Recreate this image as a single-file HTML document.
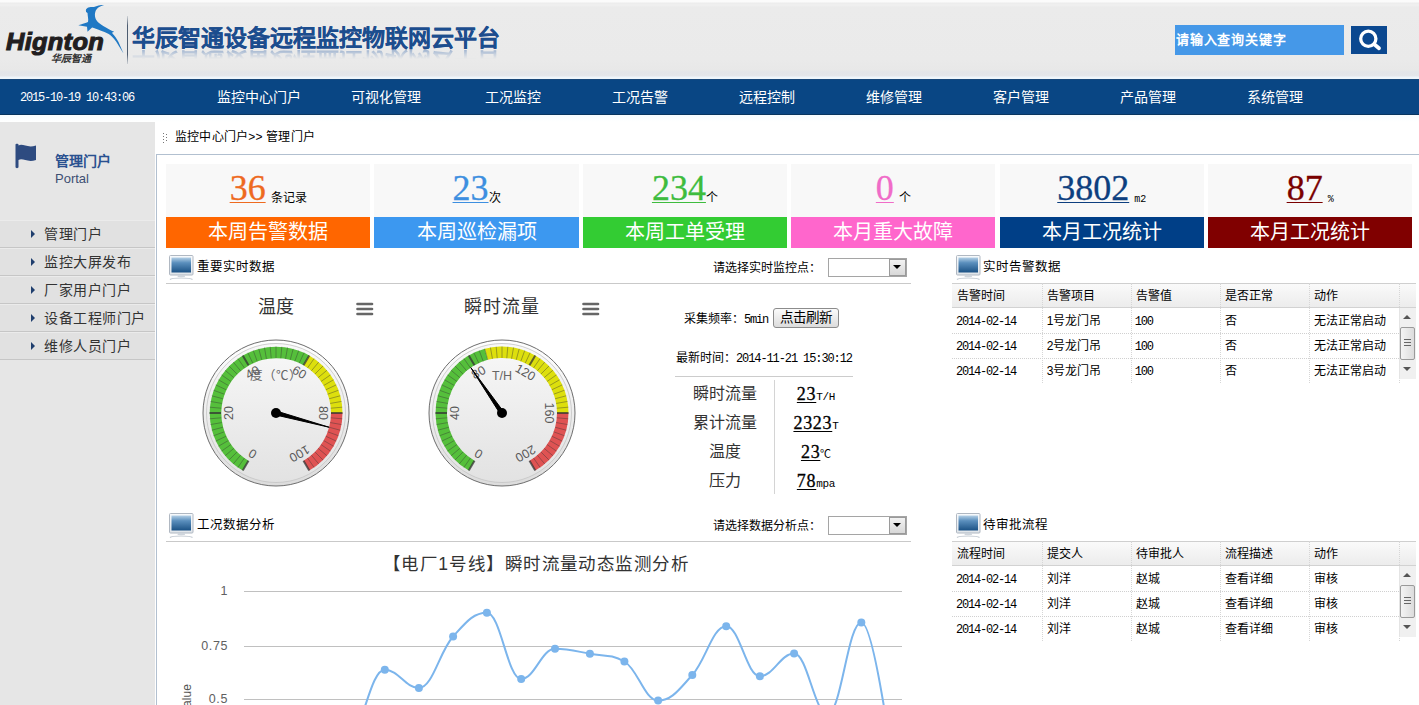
<!DOCTYPE html><html lang="zh-CN"><head><meta charset="utf-8"><style>
*{margin:0;padding:0;box-sizing:border-box}
html,body{width:1419px;height:705px;overflow:hidden;background:#fff;font-family:"Liberation Sans",sans-serif;color:#000}
.a{position:absolute;white-space:nowrap}
.mono{font-family:"Liberation Mono",monospace}
.serif{font-family:"Liberation Serif",serif}
</style></head><body>

<div class="a" style="left:0;top:0;width:1419px;height:79px;background:linear-gradient(#fbfbfb 0,#fbfbfb 2px,#ececec 3px,#f0f0f0 5px,#ebebeb 7px,#eaeaea 60px,#e8e8e8 70px,#e3e5e9 72px,#e4e6ea 76px,#eef5fb 77px,#eef5fb 79px)"></div>
<svg class="a" style="left:0;top:0" width="135" height="70" viewBox="0 0 135 70">
<text x="6" y="49.5" font-family="Liberation Sans" font-weight="bold" font-style="italic" font-size="24.5" fill="#221e1f" stroke="#221e1f" stroke-width="1.1" letter-spacing="0.3" textLength="98" lengthAdjust="spacingAndGlyphs">Hignton</text>
<path d="M104.1,5.1 C101,6 98,7.5 96.7,9.2 C95.5,10.5 95,12.5 94.9,14.7 C94.9,17 95.5,19.5 97.6,21.7 C100,24 106,28 114.2,31.8 L111.9,32.7 C114.5,35.5 117,39 118.5,42 L123.5,53.5 L116.1,41.5 C113.5,38 111,35.5 108.7,34.1 C106,32.5 103,31.2 100.4,30.4 C97,29.2 94.5,28.3 92.1,27.6 L87.5,31.8 L87,26.7 L78.3,25.3 C80.5,24.5 83,23.8 83.8,23.5 C85.5,23 87,22.5 88,22.1 C88.3,20.5 88.3,19 88,17.5 C87.8,16 87.6,14.5 87.5,12.9 L86.1,12 C85.8,11 85.8,10 86.1,9.2 C86.8,8.2 87.5,7.8 88.4,7.4 C90.5,6.8 92.5,6.9 94,6.9 C95.5,6.5 97,5.8 98.6,5.5 C100.5,5.2 102.5,5.1 104.1,5.1 Z" fill="#1f78c4"/>
<defs><linearGradient id="dv" x1="0" y1="0" x2="0" y2="1"><stop offset="0" stop-color="#5d6c80" stop-opacity="0.2"/><stop offset="0.2" stop-color="#4d5c70"/><stop offset="0.8" stop-color="#4d5c70"/><stop offset="1" stop-color="#5d6c80" stop-opacity="0.2"/></linearGradient></defs><rect x="127" y="16" width="1" height="48" fill="url(#dv)"/>
</svg>
<div class="a" style="left:51px;top:50px;font-size:10px;font-weight:bold;font-style:italic;color:#333;letter-spacing:0px">华辰智通</div>
<div class="a" style="left:132px;top:23px;font-size:23px;line-height:30px;font-weight:bold;color:#1c4d8e;-webkit-text-stroke:0.15px #1c4d8e">华辰智通设备远程监控物联网云平台</div>
<div class="a" style="left:132px;top:48.5px;height:10px;overflow:hidden;width:370px;-webkit-mask-image:linear-gradient(rgba(0,0,0,0.75),rgba(0,0,0,0.25) 60%,rgba(0,0,0,0) 100%)"><div style="font-size:23px;line-height:30px;font-weight:bold;color:#7d9bc4;transform:scaleY(-1);transform-origin:0 0;white-space:nowrap;position:relative;top:27px;filter:blur(0.6px)">华辰智通设备远程监控物联网云平台</div></div>
<div class="a" style="left:1175px;top:25px;width:169px;height:30px;background:#4598e8"></div>
<div class="a" style="left:1176px;top:32px;font-size:13px;line-height:15px;font-weight:bold;letter-spacing:0.8px;color:#fff">请输入查询关键字</div>
<div class="a" style="left:1351px;top:26px;width:36px;height:28px;background:#0b4890"></div>
<svg class="a" style="left:1352px;top:26px" width="35" height="27"><circle cx="16.3" cy="12.7" r="7.6" stroke="#fff" stroke-width="3.3" fill="none"/><line x1="22.5" y1="18.5" x2="27" y2="22.3" stroke="#fff" stroke-width="3.8" stroke-linecap="round"/></svg>
<div class="a" style="left:0;top:79px;width:1419px;height:36px;background:#094684;border-top:1px solid #17477a;border-bottom:1px solid #08355f"></div>
<div class="a" style="left:0;top:115px;width:1419px;height:7px;background:linear-gradient(#f6fcff,#fff)"></div>
<div class="a mono" style="left:20px;top:92px;font-size:12px;line-height:13px;letter-spacing:-1.2px;color:#fff">2015-10-19 10:43:06</div>
<div class="a" style="left:198.8px;width:120px;text-align:center;top:89px;font-size:14px;line-height:17px;color:#fff">监控中心门户</div>
<div class="a" style="left:325.8px;width:120px;text-align:center;top:89px;font-size:14px;line-height:17px;color:#fff">可视化管理</div>
<div class="a" style="left:452.8px;width:120px;text-align:center;top:89px;font-size:14px;line-height:17px;color:#fff">工况监控</div>
<div class="a" style="left:579.8px;width:120px;text-align:center;top:89px;font-size:14px;line-height:17px;color:#fff">工况告警</div>
<div class="a" style="left:706.8px;width:120px;text-align:center;top:89px;font-size:14px;line-height:17px;color:#fff">远程控制</div>
<div class="a" style="left:833.8px;width:120px;text-align:center;top:89px;font-size:14px;line-height:17px;color:#fff">维修管理</div>
<div class="a" style="left:960.8px;width:120px;text-align:center;top:89px;font-size:14px;line-height:17px;color:#fff">客户管理</div>
<div class="a" style="left:1087.8px;width:120px;text-align:center;top:89px;font-size:14px;line-height:17px;color:#fff">产品管理</div>
<div class="a" style="left:1214.8px;width:120px;text-align:center;top:89px;font-size:14px;line-height:17px;color:#fff">系统管理</div>
<div class="a" style="left:0;top:122px;width:155px;height:583px;background:#e6e6e6"></div>
<svg class="a" style="left:14px;top:143px" width="24" height="26"><path d="M1.5,1.5 C1.5,0.5 4.5,0.5 4.5,1.5 L4.5,2.5 C9,0 13,5.5 22,2.5 L22,17 C13,20 9,14.5 4.5,17 L4.5,24 C4.5,25.5 1.5,25.5 1.5,24 Z" fill="#2e4b80"/></svg>
<div class="a" style="left:55px;top:153px;font-size:14px;line-height:16px;font-weight:bold;color:#2a5190">管理门户</div>
<div class="a" style="left:55px;top:171px;font-size:13px;line-height:15px;color:#3d4f73">Portal</div>
<div class="a" style="left:0;top:220px;width:155px;height:28px;background:#e1e1e1;border-bottom:1px solid #c6c6c6;box-shadow:inset 0 1px 0 #ebebeb"></div>
<svg class="a" style="left:30px;top:229px" width="6" height="10"><path d="M1,1 L5,5 L1,9 Z" fill="#1f3e6e"/></svg>
<div class="a" style="left:44px;top:226px;font-size:14px;line-height:17px;letter-spacing:0.5px;color:#333">管理门户</div>
<div class="a" style="left:0;top:248px;width:155px;height:28px;background:#e1e1e1;border-bottom:1px solid #c6c6c6;box-shadow:inset 0 1px 0 #ebebeb"></div>
<svg class="a" style="left:30px;top:257px" width="6" height="10"><path d="M1,1 L5,5 L1,9 Z" fill="#1f3e6e"/></svg>
<div class="a" style="left:44px;top:254px;font-size:14px;line-height:17px;letter-spacing:0.5px;color:#333">监控大屏发布</div>
<div class="a" style="left:0;top:276px;width:155px;height:28px;background:#e1e1e1;border-bottom:1px solid #c6c6c6;box-shadow:inset 0 1px 0 #ebebeb"></div>
<svg class="a" style="left:30px;top:285px" width="6" height="10"><path d="M1,1 L5,5 L1,9 Z" fill="#1f3e6e"/></svg>
<div class="a" style="left:44px;top:282px;font-size:14px;line-height:17px;letter-spacing:0.5px;color:#333">厂家用户门户</div>
<div class="a" style="left:0;top:304px;width:155px;height:28px;background:#e1e1e1;border-bottom:1px solid #c6c6c6;box-shadow:inset 0 1px 0 #ebebeb"></div>
<svg class="a" style="left:30px;top:313px" width="6" height="10"><path d="M1,1 L5,5 L1,9 Z" fill="#1f3e6e"/></svg>
<div class="a" style="left:44px;top:310px;font-size:14px;line-height:17px;letter-spacing:0.5px;color:#333">设备工程师门户</div>
<div class="a" style="left:0;top:332px;width:155px;height:28px;background:#e1e1e1;border-bottom:1px solid #c6c6c6;box-shadow:inset 0 1px 0 #ebebeb"></div>
<svg class="a" style="left:30px;top:341px" width="6" height="10"><path d="M1,1 L5,5 L1,9 Z" fill="#1f3e6e"/></svg>
<div class="a" style="left:44px;top:338px;font-size:14px;line-height:17px;letter-spacing:0.5px;color:#333">维修人员门户</div>
<div class="a" style="left:156px;top:154px;width:1263px;height:551px;border-left:1px solid #b2c0d0;border-top:1px solid #b2c0d0"></div>
<svg class="a" style="left:162px;top:132px" width="6" height="12"><g fill="#777"><rect x="1" y="1" width="1" height="1"/><rect x="1" y="4" width="1" height="1"/><rect x="1" y="7" width="1" height="1"/><rect x="1" y="10" width="1" height="1"/><rect x="4" y="2" width="1" height="1"/><rect x="4" y="5" width="1" height="1"/><rect x="4" y="8" width="1" height="1"/></g></svg>
<div class="a" style="left:175px;top:130px;font-size:12px;line-height:15px;letter-spacing:0.2px;color:#000">监控中心门户&gt;&gt; 管理门户</div>
<div class="a" style="left:166.0px;top:164px;width:204.3px;height:53px;background:#f8f8f8"></div>
<div class="a" style="left:166.0px;top:217px;width:204.3px;height:31px;background:#ff6600"></div>
<div class="a" style="left:166.0px;top:220px;width:204.3px;text-align:center;font-size:20px;line-height:24px;color:#fff">本周告警数据</div>
<div class="a" style="left:166.0px;top:168px;width:204.3px;text-align:center;line-height:40px"><span class="serif" style="font-size:36px;color:#ee6a1f;-webkit-text-stroke:0.3px #ee6a1f;text-decoration:underline;text-decoration-thickness:1px;text-underline-offset:2px">36</span><span style="font-size:12px;margin-left:5px;font-family:'Liberation Sans', sans-serif;position:relative;top:2px">条记录</span></div>
<div class="a" style="left:374.4px;top:164px;width:204.3px;height:53px;background:#f8f8f8"></div>
<div class="a" style="left:374.4px;top:217px;width:204.3px;height:31px;background:#3c98f0"></div>
<div class="a" style="left:374.4px;top:220px;width:204.3px;text-align:center;font-size:20px;line-height:24px;color:#fff">本周巡检漏项</div>
<div class="a" style="left:374.4px;top:168px;width:204.3px;text-align:center;line-height:40px"><span class="serif" style="font-size:36px;color:#3d8fe0;-webkit-text-stroke:0.3px #3d8fe0;text-decoration:underline;text-decoration-thickness:1px;text-underline-offset:2px">23</span><span style="font-size:12px;margin-left:0px;font-family:'Liberation Sans', sans-serif;position:relative;top:2px">次</span></div>
<div class="a" style="left:582.8px;top:164px;width:204.3px;height:53px;background:#f8f8f8"></div>
<div class="a" style="left:582.8px;top:217px;width:204.3px;height:31px;background:#33cc33"></div>
<div class="a" style="left:582.8px;top:220px;width:204.3px;text-align:center;font-size:20px;line-height:24px;color:#fff">本周工单受理</div>
<div class="a" style="left:582.8px;top:168px;width:204.3px;text-align:center;line-height:40px"><span class="serif" style="font-size:36px;color:#3ebc3e;-webkit-text-stroke:0.3px #3ebc3e;text-decoration:underline;text-decoration-thickness:1px;text-underline-offset:2px">234</span><span style="font-size:12px;margin-left:0px;font-family:'Liberation Sans', sans-serif;position:relative;top:2px">个</span></div>
<div class="a" style="left:791.2px;top:164px;width:204.3px;height:53px;background:#f8f8f8"></div>
<div class="a" style="left:791.2px;top:217px;width:204.3px;height:31px;background:#ff66cc"></div>
<div class="a" style="left:791.2px;top:220px;width:204.3px;text-align:center;font-size:20px;line-height:24px;color:#fff">本月重大故障</div>
<div class="a" style="left:791.2px;top:168px;width:204.3px;text-align:center;line-height:40px"><span class="serif" style="font-size:36px;color:#f06cc8;-webkit-text-stroke:0.3px #f06cc8;text-decoration:underline;text-decoration-thickness:1px;text-underline-offset:2px">0</span><span style="font-size:12px;margin-left:5px;font-family:'Liberation Sans', sans-serif;position:relative;top:2px">个</span></div>
<div class="a" style="left:999.6px;top:164px;width:204.3px;height:53px;background:#f8f8f8"></div>
<div class="a" style="left:999.6px;top:217px;width:204.3px;height:31px;background:#003f87"></div>
<div class="a" style="left:999.6px;top:220px;width:204.3px;text-align:center;font-size:20px;line-height:24px;color:#fff">本月工况统计</div>
<div class="a" style="left:999.6px;top:168px;width:204.3px;text-align:center;line-height:40px"><span class="serif" style="font-size:36px;color:#0d3f7f;-webkit-text-stroke:0.3px #0d3f7f;text-decoration:underline;text-decoration-thickness:1px;text-underline-offset:2px">3802</span><span style="font-size:10px;margin-left:5px;font-family:'Liberation Mono', monospace;position:relative;top:2px">m2</span></div>
<div class="a" style="left:1208.0px;top:164px;width:204.3px;height:53px;background:#f8f8f8"></div>
<div class="a" style="left:1208.0px;top:217px;width:204.3px;height:31px;background:#800000"></div>
<div class="a" style="left:1208.0px;top:220px;width:204.3px;text-align:center;font-size:20px;line-height:24px;color:#fff">本月工况统计</div>
<div class="a" style="left:1208.0px;top:168px;width:204.3px;text-align:center;line-height:40px"><span class="serif" style="font-size:36px;color:#7a0000;-webkit-text-stroke:0.3px #7a0000;text-decoration:underline;text-decoration-thickness:1px;text-underline-offset:2px">87</span><span style="font-size:10px;margin-left:5px;font-family:'Liberation Mono', monospace;position:relative;top:2px">%</span></div>
<svg class="a" style="left:169px;top:255px" width="26" height="26" viewBox="0 0 26 26">
<defs><linearGradient id="scr169255" x1="0" y1="0" x2="0" y2="1"><stop offset="0" stop-color="#b4d0e6"/><stop offset="0.35" stop-color="#5b8fbd"/><stop offset="1" stop-color="#1b5285"/></linearGradient>
<linearGradient id="bzl169255" x1="0" y1="0" x2="0" y2="1"><stop offset="0" stop-color="#f8fafc"/><stop offset="1" stop-color="#dfe4e9"/></linearGradient></defs>
<rect x="0.5" y="0.5" width="23.5" height="19.5" rx="1" fill="url(#bzl169255)" stroke="#b0b8c2"/>
<rect x="2.5" y="2.5" width="19.5" height="15" fill="url(#scr169255)"/>
<path d="M9,20 L15.5,20 L16,22 L8.5,22 Z" fill="#cfd5dc"/>
<path d="M1,24.5 C3,22.5 21,22.5 23.5,24.5" stroke="#c3cad2" stroke-width="1.2" fill="none"/>
</svg>
<div class="a" style="left:197px;top:260px;font-size:12.5px;line-height:15px;color:#000">重要实时数据</div>
<div class="a" style="left:713px;top:261px;font-size:12px;line-height:15px;color:#000">请选择实时监控点：</div>
<div class="a" style="left:828px;top:258px;width:79px;height:19px;border:1px solid #a5a5a5;background:#fff"></div>
<div class="a" style="left:889px;top:259px;width:17px;height:17px;background:linear-gradient(#f2f2f2,#d8d8d8);border:1px solid #9a9a9a"></div>
<svg class="a" style="left:893px;top:265px" width="9" height="5"><path d="M0,0 L8,0 L4,4 Z" fill="#000"/></svg>
<div class="a" style="left:166px;top:283px;width:745px;height:1px;background:#c9c9c9"></div>
<svg class="a" style="left:169px;top:513px" width="26" height="26" viewBox="0 0 26 26">
<defs><linearGradient id="scr169513" x1="0" y1="0" x2="0" y2="1"><stop offset="0" stop-color="#b4d0e6"/><stop offset="0.35" stop-color="#5b8fbd"/><stop offset="1" stop-color="#1b5285"/></linearGradient>
<linearGradient id="bzl169513" x1="0" y1="0" x2="0" y2="1"><stop offset="0" stop-color="#f8fafc"/><stop offset="1" stop-color="#dfe4e9"/></linearGradient></defs>
<rect x="0.5" y="0.5" width="23.5" height="19.5" rx="1" fill="url(#bzl169513)" stroke="#b0b8c2"/>
<rect x="2.5" y="2.5" width="19.5" height="15" fill="url(#scr169513)"/>
<path d="M9,20 L15.5,20 L16,22 L8.5,22 Z" fill="#cfd5dc"/>
<path d="M1,24.5 C3,22.5 21,22.5 23.5,24.5" stroke="#c3cad2" stroke-width="1.2" fill="none"/>
</svg>
<div class="a" style="left:197px;top:518px;font-size:12.5px;line-height:15px;color:#000">工况数据分析</div>
<div class="a" style="left:713px;top:519px;font-size:12px;line-height:15px;color:#000">请选择数据分析点：</div>
<div class="a" style="left:828px;top:516px;width:79px;height:19px;border:1px solid #a5a5a5;background:#fff"></div>
<div class="a" style="left:889px;top:517px;width:17px;height:17px;background:linear-gradient(#f2f2f2,#d8d8d8);border:1px solid #9a9a9a"></div>
<svg class="a" style="left:893px;top:523px" width="9" height="5"><path d="M0,0 L8,0 L4,4 Z" fill="#000"/></svg>
<div class="a" style="left:166px;top:541px;width:745px;height:1px;background:#c9c9c9"></div>
<svg class="a" style="left:956px;top:255px" width="26" height="26" viewBox="0 0 26 26">
<defs><linearGradient id="scr956255" x1="0" y1="0" x2="0" y2="1"><stop offset="0" stop-color="#b4d0e6"/><stop offset="0.35" stop-color="#5b8fbd"/><stop offset="1" stop-color="#1b5285"/></linearGradient>
<linearGradient id="bzl956255" x1="0" y1="0" x2="0" y2="1"><stop offset="0" stop-color="#f8fafc"/><stop offset="1" stop-color="#dfe4e9"/></linearGradient></defs>
<rect x="0.5" y="0.5" width="23.5" height="19.5" rx="1" fill="url(#bzl956255)" stroke="#b0b8c2"/>
<rect x="2.5" y="2.5" width="19.5" height="15" fill="url(#scr956255)"/>
<path d="M9,20 L15.5,20 L16,22 L8.5,22 Z" fill="#cfd5dc"/>
<path d="M1,24.5 C3,22.5 21,22.5 23.5,24.5" stroke="#c3cad2" stroke-width="1.2" fill="none"/>
</svg>
<div class="a" style="left:983px;top:260px;font-size:12.5px;line-height:15px;color:#000">实时告警数据</div>
<svg class="a" style="left:956px;top:513px" width="26" height="26" viewBox="0 0 26 26">
<defs><linearGradient id="scr956513" x1="0" y1="0" x2="0" y2="1"><stop offset="0" stop-color="#b4d0e6"/><stop offset="0.35" stop-color="#5b8fbd"/><stop offset="1" stop-color="#1b5285"/></linearGradient>
<linearGradient id="bzl956513" x1="0" y1="0" x2="0" y2="1"><stop offset="0" stop-color="#f8fafc"/><stop offset="1" stop-color="#dfe4e9"/></linearGradient></defs>
<rect x="0.5" y="0.5" width="23.5" height="19.5" rx="1" fill="url(#bzl956513)" stroke="#b0b8c2"/>
<rect x="2.5" y="2.5" width="19.5" height="15" fill="url(#scr956513)"/>
<path d="M9,20 L15.5,20 L16,22 L8.5,22 Z" fill="#cfd5dc"/>
<path d="M1,24.5 C3,22.5 21,22.5 23.5,24.5" stroke="#c3cad2" stroke-width="1.2" fill="none"/>
</svg>
<div class="a" style="left:983px;top:518px;font-size:12.5px;line-height:15px;color:#000">待审批流程</div>
<svg class="a" style="left:195.60000000000002px;top:333.2px" width="160" height="160" viewBox="195.60000000000002 333.2 160 160"><defs>
<linearGradient id="bz1" x1="0" y1="0" x2="0" y2="1"><stop offset="0" stop-color="#ffffff"/><stop offset="1" stop-color="#dcdcdc"/></linearGradient>
<linearGradient id="bz21" x1="0" y1="0" x2="0" y2="1"><stop offset="0" stop-color="#d0d0d0"/><stop offset="1" stop-color="#ffffff"/></linearGradient>
<linearGradient id="fc1" x1="0" y1="0" x2="0" y2="1"><stop offset="0" stop-color="#f8f8f8"/><stop offset="1" stop-color="#e2e2e2"/></linearGradient>
</defs><circle cx="275.6" cy="413.2" r="73" fill="url(#bz1)" stroke="#6e6e6e" stroke-width="1"/><circle cx="275.6" cy="413.2" r="69.5" fill="url(#fc1)" stroke="#c4c4c4" stroke-width="0.8"/><path d="M242.35,470.79 A66.5,66.5 0 0 1 308.85,355.61 L303.10,365.57 A55,55 0 0 0 248.10,460.83 Z" fill="#55BF3B"/><path d="M308.85,355.61 A66.5,66.5 0 0 1 342.10,413.20 L330.60,413.20 A55,55 0 0 0 303.10,365.57 Z" fill="#DDDF0D"/><path d="M342.10,413.20 A66.5,66.5 0 0 1 308.85,470.79 L303.10,460.83 A55,55 0 0 0 330.60,413.20 Z" fill="#DF5353"/><line x1="242.35" y1="470.79" x2="248.10" y2="460.83" stroke="#333" stroke-width="2" opacity="0.75"/><line x1="237.46" y1="467.67" x2="244.05" y2="458.25" stroke="#333" stroke-width="1" opacity="0.4"/><line x1="232.85" y1="464.14" x2="240.25" y2="455.33" stroke="#333" stroke-width="1" opacity="0.4"/><line x1="228.58" y1="460.22" x2="236.71" y2="452.09" stroke="#333" stroke-width="1" opacity="0.4"/><line x1="224.66" y1="455.95" x2="233.47" y2="448.55" stroke="#333" stroke-width="1" opacity="0.4"/><line x1="221.13" y1="451.34" x2="230.55" y2="444.75" stroke="#333" stroke-width="1" opacity="0.4"/><line x1="218.01" y1="446.45" x2="227.97" y2="440.70" stroke="#333" stroke-width="1" opacity="0.4"/><line x1="215.33" y1="441.30" x2="225.75" y2="436.44" stroke="#333" stroke-width="1" opacity="0.4"/><line x1="213.11" y1="435.94" x2="223.92" y2="432.01" stroke="#333" stroke-width="1" opacity="0.4"/><line x1="211.37" y1="430.41" x2="222.47" y2="427.44" stroke="#333" stroke-width="1" opacity="0.4"/><line x1="210.11" y1="424.75" x2="221.44" y2="422.75" stroke="#333" stroke-width="1" opacity="0.4"/><line x1="209.35" y1="419.00" x2="220.81" y2="417.99" stroke="#333" stroke-width="1" opacity="0.4"/><line x1="209.10" y1="413.20" x2="220.60" y2="413.20" stroke="#333" stroke-width="2" opacity="0.75"/><line x1="209.35" y1="407.40" x2="220.81" y2="408.41" stroke="#333" stroke-width="1" opacity="0.4"/><line x1="210.11" y1="401.65" x2="221.44" y2="403.65" stroke="#333" stroke-width="1" opacity="0.4"/><line x1="211.37" y1="395.99" x2="222.47" y2="398.96" stroke="#333" stroke-width="1" opacity="0.4"/><line x1="213.11" y1="390.46" x2="223.92" y2="394.39" stroke="#333" stroke-width="1" opacity="0.4"/><line x1="215.33" y1="385.10" x2="225.75" y2="389.96" stroke="#333" stroke-width="1" opacity="0.4"/><line x1="218.01" y1="379.95" x2="227.97" y2="385.70" stroke="#333" stroke-width="1" opacity="0.4"/><line x1="221.13" y1="375.06" x2="230.55" y2="381.65" stroke="#333" stroke-width="1" opacity="0.4"/><line x1="224.66" y1="370.45" x2="233.47" y2="377.85" stroke="#333" stroke-width="1" opacity="0.4"/><line x1="228.58" y1="366.18" x2="236.71" y2="374.31" stroke="#333" stroke-width="1" opacity="0.4"/><line x1="232.85" y1="362.26" x2="240.25" y2="371.07" stroke="#333" stroke-width="1" opacity="0.4"/><line x1="237.46" y1="358.73" x2="244.05" y2="368.15" stroke="#333" stroke-width="1" opacity="0.4"/><line x1="242.35" y1="355.61" x2="248.10" y2="365.57" stroke="#333" stroke-width="2" opacity="0.75"/><line x1="247.50" y1="352.93" x2="252.36" y2="363.35" stroke="#333" stroke-width="1" opacity="0.4"/><line x1="252.86" y1="350.71" x2="256.79" y2="361.52" stroke="#333" stroke-width="1" opacity="0.4"/><line x1="258.39" y1="348.97" x2="261.36" y2="360.07" stroke="#333" stroke-width="1" opacity="0.4"/><line x1="264.05" y1="347.71" x2="266.05" y2="359.04" stroke="#333" stroke-width="1" opacity="0.4"/><line x1="269.80" y1="346.95" x2="270.81" y2="358.41" stroke="#333" stroke-width="1" opacity="0.4"/><line x1="275.60" y1="346.70" x2="275.60" y2="358.20" stroke="#333" stroke-width="1" opacity="0.4"/><line x1="281.40" y1="346.95" x2="280.39" y2="358.41" stroke="#333" stroke-width="1" opacity="0.4"/><line x1="287.15" y1="347.71" x2="285.15" y2="359.04" stroke="#333" stroke-width="1" opacity="0.4"/><line x1="292.81" y1="348.97" x2="289.84" y2="360.07" stroke="#333" stroke-width="1" opacity="0.4"/><line x1="298.34" y1="350.71" x2="294.41" y2="361.52" stroke="#333" stroke-width="1" opacity="0.4"/><line x1="303.70" y1="352.93" x2="298.84" y2="363.35" stroke="#333" stroke-width="1" opacity="0.4"/><line x1="308.85" y1="355.61" x2="303.10" y2="365.57" stroke="#333" stroke-width="2" opacity="0.75"/><line x1="313.74" y1="358.73" x2="307.15" y2="368.15" stroke="#333" stroke-width="1" opacity="0.4"/><line x1="318.35" y1="362.26" x2="310.95" y2="371.07" stroke="#333" stroke-width="1" opacity="0.4"/><line x1="322.62" y1="366.18" x2="314.49" y2="374.31" stroke="#333" stroke-width="1" opacity="0.4"/><line x1="326.54" y1="370.45" x2="317.73" y2="377.85" stroke="#333" stroke-width="1" opacity="0.4"/><line x1="330.07" y1="375.06" x2="320.65" y2="381.65" stroke="#333" stroke-width="1" opacity="0.4"/><line x1="333.19" y1="379.95" x2="323.23" y2="385.70" stroke="#333" stroke-width="1" opacity="0.4"/><line x1="335.87" y1="385.10" x2="325.45" y2="389.96" stroke="#333" stroke-width="1" opacity="0.4"/><line x1="338.09" y1="390.46" x2="327.28" y2="394.39" stroke="#333" stroke-width="1" opacity="0.4"/><line x1="339.83" y1="395.99" x2="328.73" y2="398.96" stroke="#333" stroke-width="1" opacity="0.4"/><line x1="341.09" y1="401.65" x2="329.76" y2="403.65" stroke="#333" stroke-width="1" opacity="0.4"/><line x1="341.85" y1="407.40" x2="330.39" y2="408.41" stroke="#333" stroke-width="1" opacity="0.4"/><line x1="342.10" y1="413.20" x2="330.60" y2="413.20" stroke="#333" stroke-width="2" opacity="0.75"/><line x1="341.85" y1="419.00" x2="330.39" y2="417.99" stroke="#333" stroke-width="1" opacity="0.4"/><line x1="341.09" y1="424.75" x2="329.76" y2="422.75" stroke="#333" stroke-width="1" opacity="0.4"/><line x1="339.83" y1="430.41" x2="328.73" y2="427.44" stroke="#333" stroke-width="1" opacity="0.4"/><line x1="338.09" y1="435.94" x2="327.28" y2="432.01" stroke="#333" stroke-width="1" opacity="0.4"/><line x1="335.87" y1="441.30" x2="325.45" y2="436.44" stroke="#333" stroke-width="1" opacity="0.4"/><line x1="333.19" y1="446.45" x2="323.23" y2="440.70" stroke="#333" stroke-width="1" opacity="0.4"/><line x1="330.07" y1="451.34" x2="320.65" y2="444.75" stroke="#333" stroke-width="1" opacity="0.4"/><line x1="326.54" y1="455.95" x2="317.73" y2="448.55" stroke="#333" stroke-width="1" opacity="0.4"/><line x1="322.62" y1="460.22" x2="314.49" y2="452.09" stroke="#333" stroke-width="1" opacity="0.4"/><line x1="318.35" y1="464.14" x2="310.95" y2="455.33" stroke="#333" stroke-width="1" opacity="0.4"/><line x1="313.74" y1="467.67" x2="307.15" y2="458.25" stroke="#333" stroke-width="1" opacity="0.4"/><line x1="308.85" y1="470.79" x2="303.10" y2="460.83" stroke="#333" stroke-width="2" opacity="0.75"/><text x="252.60" y="453.04" transform="rotate(-150 252.60 453.04)" text-anchor="middle" dominant-baseline="middle" font-family="Liberation Sans" font-size="12.5" fill="#5a5a5a">0</text><text x="229.60" y="413.20" transform="rotate(-90 229.60 413.20)" text-anchor="middle" dominant-baseline="middle" font-family="Liberation Sans" font-size="12.5" fill="#5a5a5a">20</text><text x="252.60" y="373.36" transform="rotate(-30 252.60 373.36)" text-anchor="middle" dominant-baseline="middle" font-family="Liberation Sans" font-size="12.5" fill="#5a5a5a">40</text><text x="298.60" y="373.36" transform="rotate(30 298.60 373.36)" text-anchor="middle" dominant-baseline="middle" font-family="Liberation Sans" font-size="12.5" fill="#5a5a5a">60</text><text x="321.60" y="413.20" transform="rotate(90 321.60 413.20)" text-anchor="middle" dominant-baseline="middle" font-family="Liberation Sans" font-size="12.5" fill="#5a5a5a">80</text><text x="298.60" y="453.04" transform="rotate(150 298.60 453.04)" text-anchor="middle" dominant-baseline="middle" font-family="Liberation Sans" font-size="12.5" fill="#5a5a5a">100</text><text x="275.6" y="380.2" text-anchor="middle" font-family="Liberation Sans" font-size="12.5" fill="#666">度（℃）</text><path d="M275.08,415.13 L328.73,427.44 L276.12,411.27 Z" fill="#000" stroke="#000" stroke-width="1"/><circle cx="275.6" cy="413.2" r="5" fill="#000"/></svg>
<svg class="a" style="left:421.8px;top:333.2px" width="160" height="160" viewBox="421.8 333.2 160 160"><defs>
<linearGradient id="bz2" x1="0" y1="0" x2="0" y2="1"><stop offset="0" stop-color="#ffffff"/><stop offset="1" stop-color="#dcdcdc"/></linearGradient>
<linearGradient id="bz22" x1="0" y1="0" x2="0" y2="1"><stop offset="0" stop-color="#d0d0d0"/><stop offset="1" stop-color="#ffffff"/></linearGradient>
<linearGradient id="fc2" x1="0" y1="0" x2="0" y2="1"><stop offset="0" stop-color="#f8f8f8"/><stop offset="1" stop-color="#e2e2e2"/></linearGradient>
</defs><circle cx="501.8" cy="413.2" r="73" fill="url(#bz2)" stroke="#6e6e6e" stroke-width="1"/><circle cx="501.8" cy="413.2" r="69.5" fill="url(#fc2)" stroke="#c4c4c4" stroke-width="0.8"/><path d="M468.55,470.79 A66.5,66.5 0 0 1 484.59,348.97 L487.56,360.07 A55,55 0 0 0 474.30,460.83 Z" fill="#55BF3B"/><path d="M484.59,348.97 A66.5,66.5 0 0 1 568.30,413.20 L556.80,413.20 A55,55 0 0 0 487.56,360.07 Z" fill="#DDDF0D"/><path d="M568.30,413.20 A66.5,66.5 0 0 1 535.05,470.79 L529.30,460.83 A55,55 0 0 0 556.80,413.20 Z" fill="#DF5353"/><line x1="468.55" y1="470.79" x2="474.30" y2="460.83" stroke="#333" stroke-width="2" opacity="0.75"/><line x1="463.66" y1="467.67" x2="470.25" y2="458.25" stroke="#333" stroke-width="1" opacity="0.4"/><line x1="459.05" y1="464.14" x2="466.45" y2="455.33" stroke="#333" stroke-width="1" opacity="0.4"/><line x1="454.78" y1="460.22" x2="462.91" y2="452.09" stroke="#333" stroke-width="1" opacity="0.4"/><line x1="450.86" y1="455.95" x2="459.67" y2="448.55" stroke="#333" stroke-width="1" opacity="0.4"/><line x1="447.33" y1="451.34" x2="456.75" y2="444.75" stroke="#333" stroke-width="1" opacity="0.4"/><line x1="444.21" y1="446.45" x2="454.17" y2="440.70" stroke="#333" stroke-width="1" opacity="0.4"/><line x1="441.53" y1="441.30" x2="451.95" y2="436.44" stroke="#333" stroke-width="1" opacity="0.4"/><line x1="439.31" y1="435.94" x2="450.12" y2="432.01" stroke="#333" stroke-width="1" opacity="0.4"/><line x1="437.57" y1="430.41" x2="448.67" y2="427.44" stroke="#333" stroke-width="1" opacity="0.4"/><line x1="436.31" y1="424.75" x2="447.64" y2="422.75" stroke="#333" stroke-width="1" opacity="0.4"/><line x1="435.55" y1="419.00" x2="447.01" y2="417.99" stroke="#333" stroke-width="1" opacity="0.4"/><line x1="435.30" y1="413.20" x2="446.80" y2="413.20" stroke="#333" stroke-width="2" opacity="0.75"/><line x1="435.55" y1="407.40" x2="447.01" y2="408.41" stroke="#333" stroke-width="1" opacity="0.4"/><line x1="436.31" y1="401.65" x2="447.64" y2="403.65" stroke="#333" stroke-width="1" opacity="0.4"/><line x1="437.57" y1="395.99" x2="448.67" y2="398.96" stroke="#333" stroke-width="1" opacity="0.4"/><line x1="439.31" y1="390.46" x2="450.12" y2="394.39" stroke="#333" stroke-width="1" opacity="0.4"/><line x1="441.53" y1="385.10" x2="451.95" y2="389.96" stroke="#333" stroke-width="1" opacity="0.4"/><line x1="444.21" y1="379.95" x2="454.17" y2="385.70" stroke="#333" stroke-width="1" opacity="0.4"/><line x1="447.33" y1="375.06" x2="456.75" y2="381.65" stroke="#333" stroke-width="1" opacity="0.4"/><line x1="450.86" y1="370.45" x2="459.67" y2="377.85" stroke="#333" stroke-width="1" opacity="0.4"/><line x1="454.78" y1="366.18" x2="462.91" y2="374.31" stroke="#333" stroke-width="1" opacity="0.4"/><line x1="459.05" y1="362.26" x2="466.45" y2="371.07" stroke="#333" stroke-width="1" opacity="0.4"/><line x1="463.66" y1="358.73" x2="470.25" y2="368.15" stroke="#333" stroke-width="1" opacity="0.4"/><line x1="468.55" y1="355.61" x2="474.30" y2="365.57" stroke="#333" stroke-width="2" opacity="0.75"/><line x1="473.70" y1="352.93" x2="478.56" y2="363.35" stroke="#333" stroke-width="1" opacity="0.4"/><line x1="479.06" y1="350.71" x2="482.99" y2="361.52" stroke="#333" stroke-width="1" opacity="0.4"/><line x1="484.59" y1="348.97" x2="487.56" y2="360.07" stroke="#333" stroke-width="1" opacity="0.4"/><line x1="490.25" y1="347.71" x2="492.25" y2="359.04" stroke="#333" stroke-width="1" opacity="0.4"/><line x1="496.00" y1="346.95" x2="497.01" y2="358.41" stroke="#333" stroke-width="1" opacity="0.4"/><line x1="501.80" y1="346.70" x2="501.80" y2="358.20" stroke="#333" stroke-width="1" opacity="0.4"/><line x1="507.60" y1="346.95" x2="506.59" y2="358.41" stroke="#333" stroke-width="1" opacity="0.4"/><line x1="513.35" y1="347.71" x2="511.35" y2="359.04" stroke="#333" stroke-width="1" opacity="0.4"/><line x1="519.01" y1="348.97" x2="516.04" y2="360.07" stroke="#333" stroke-width="1" opacity="0.4"/><line x1="524.54" y1="350.71" x2="520.61" y2="361.52" stroke="#333" stroke-width="1" opacity="0.4"/><line x1="529.90" y1="352.93" x2="525.04" y2="363.35" stroke="#333" stroke-width="1" opacity="0.4"/><line x1="535.05" y1="355.61" x2="529.30" y2="365.57" stroke="#333" stroke-width="2" opacity="0.75"/><line x1="539.94" y1="358.73" x2="533.35" y2="368.15" stroke="#333" stroke-width="1" opacity="0.4"/><line x1="544.55" y1="362.26" x2="537.15" y2="371.07" stroke="#333" stroke-width="1" opacity="0.4"/><line x1="548.82" y1="366.18" x2="540.69" y2="374.31" stroke="#333" stroke-width="1" opacity="0.4"/><line x1="552.74" y1="370.45" x2="543.93" y2="377.85" stroke="#333" stroke-width="1" opacity="0.4"/><line x1="556.27" y1="375.06" x2="546.85" y2="381.65" stroke="#333" stroke-width="1" opacity="0.4"/><line x1="559.39" y1="379.95" x2="549.43" y2="385.70" stroke="#333" stroke-width="1" opacity="0.4"/><line x1="562.07" y1="385.10" x2="551.65" y2="389.96" stroke="#333" stroke-width="1" opacity="0.4"/><line x1="564.29" y1="390.46" x2="553.48" y2="394.39" stroke="#333" stroke-width="1" opacity="0.4"/><line x1="566.03" y1="395.99" x2="554.93" y2="398.96" stroke="#333" stroke-width="1" opacity="0.4"/><line x1="567.29" y1="401.65" x2="555.96" y2="403.65" stroke="#333" stroke-width="1" opacity="0.4"/><line x1="568.05" y1="407.40" x2="556.59" y2="408.41" stroke="#333" stroke-width="1" opacity="0.4"/><line x1="568.30" y1="413.20" x2="556.80" y2="413.20" stroke="#333" stroke-width="2" opacity="0.75"/><line x1="568.05" y1="419.00" x2="556.59" y2="417.99" stroke="#333" stroke-width="1" opacity="0.4"/><line x1="567.29" y1="424.75" x2="555.96" y2="422.75" stroke="#333" stroke-width="1" opacity="0.4"/><line x1="566.03" y1="430.41" x2="554.93" y2="427.44" stroke="#333" stroke-width="1" opacity="0.4"/><line x1="564.29" y1="435.94" x2="553.48" y2="432.01" stroke="#333" stroke-width="1" opacity="0.4"/><line x1="562.07" y1="441.30" x2="551.65" y2="436.44" stroke="#333" stroke-width="1" opacity="0.4"/><line x1="559.39" y1="446.45" x2="549.43" y2="440.70" stroke="#333" stroke-width="1" opacity="0.4"/><line x1="556.27" y1="451.34" x2="546.85" y2="444.75" stroke="#333" stroke-width="1" opacity="0.4"/><line x1="552.74" y1="455.95" x2="543.93" y2="448.55" stroke="#333" stroke-width="1" opacity="0.4"/><line x1="548.82" y1="460.22" x2="540.69" y2="452.09" stroke="#333" stroke-width="1" opacity="0.4"/><line x1="544.55" y1="464.14" x2="537.15" y2="455.33" stroke="#333" stroke-width="1" opacity="0.4"/><line x1="539.94" y1="467.67" x2="533.35" y2="458.25" stroke="#333" stroke-width="1" opacity="0.4"/><line x1="535.05" y1="470.79" x2="529.30" y2="460.83" stroke="#333" stroke-width="2" opacity="0.75"/><text x="478.80" y="453.04" transform="rotate(-150 478.80 453.04)" text-anchor="middle" dominant-baseline="middle" font-family="Liberation Sans" font-size="12.5" fill="#5a5a5a">0</text><text x="455.80" y="413.20" transform="rotate(-90 455.80 413.20)" text-anchor="middle" dominant-baseline="middle" font-family="Liberation Sans" font-size="12.5" fill="#5a5a5a">40</text><text x="478.80" y="373.36" transform="rotate(-30 478.80 373.36)" text-anchor="middle" dominant-baseline="middle" font-family="Liberation Sans" font-size="12.5" fill="#5a5a5a">80</text><text x="524.80" y="373.36" transform="rotate(30 524.80 373.36)" text-anchor="middle" dominant-baseline="middle" font-family="Liberation Sans" font-size="12.5" fill="#5a5a5a">120</text><text x="547.80" y="413.20" transform="rotate(90 547.80 413.20)" text-anchor="middle" dominant-baseline="middle" font-family="Liberation Sans" font-size="12.5" fill="#5a5a5a">160</text><text x="524.80" y="453.04" transform="rotate(150 524.80 453.04)" text-anchor="middle" dominant-baseline="middle" font-family="Liberation Sans" font-size="12.5" fill="#5a5a5a">200</text><text x="501.8" y="380.2" text-anchor="middle" font-family="Liberation Sans" font-size="12.5" fill="#666">T/H</text><path d="M503.45,412.07 L470.65,367.87 L500.15,414.33 Z" fill="#000" stroke="#000" stroke-width="1"/><circle cx="501.8" cy="413.2" r="5" fill="#000"/></svg>
<div class="a" style="left:226px;width:100px;text-align:center;top:297px;font-size:18px;line-height:21px;letter-spacing:0.5px;color:#333">温度</div>
<div class="a" style="left:452px;width:100px;text-align:center;top:297px;font-size:18px;line-height:21px;letter-spacing:1px;color:#333">瞬时流量</div>
<svg class="a" style="left:356px;top:302px" width="18" height="14"><g stroke="#666" stroke-width="2.6" stroke-linecap="round"><line x1="1.5" y1="2" x2="16" y2="2"/><line x1="1.5" y1="7" x2="16" y2="7"/><line x1="1.5" y1="12" x2="16" y2="12"/></g></svg>
<svg class="a" style="left:582px;top:302px" width="18" height="14"><g stroke="#666" stroke-width="2.6" stroke-linecap="round"><line x1="1.5" y1="2" x2="16" y2="2"/><line x1="1.5" y1="7" x2="16" y2="7"/><line x1="1.5" y1="12" x2="16" y2="12"/></g></svg>
<div class="a" style="left:684px;top:312px;font-size:12px;line-height:15px;color:#000">采集频率：<span class="mono" style="font-size:12px;letter-spacing:-1.2px">5min</span></div>
<div class="a" style="left:773px;top:308px;width:66px;height:20px;border:1px solid #8c8c8c;border-radius:3px;background:linear-gradient(#fbfbfb,#dcdcdc);font-size:13.5px;line-height:18px;text-align:center;color:#000">点击刷新</div>
<div class="a" style="left:676px;top:351px;font-size:12px;line-height:15px;color:#000">最新时间：<span class="mono" style="font-size:12px;letter-spacing:-1.1px">2014-11-21 15:30:12</span></div>
<div class="a" style="left:675px;top:376px;width:178px;height:1px;background:#ccc"></div>
<div class="a" style="left:774px;top:380px;width:1px;height:114px;background:#d4d4d4"></div>
<div class="a" style="left:675px;width:100px;text-align:center;top:383.5px;font-size:16px;line-height:20px;color:#333">瞬时流量</div>
<div class="a" style="left:777px;width:78px;text-align:center;top:382.5px;line-height:22px"><span class="serif" style="font-size:18px;letter-spacing:0.7px;color:#000;-webkit-text-stroke:0.3px #000;text-decoration:underline;text-decoration-thickness:1px;text-underline-offset:2px">23</span><span class="mono" style="font-size:11px;letter-spacing:-0.3px">T/H</span></div>
<div class="a" style="left:675px;width:100px;text-align:center;top:412.5px;font-size:16px;line-height:20px;color:#333">累计流量</div>
<div class="a" style="left:777px;width:78px;text-align:center;top:411.5px;line-height:22px"><span class="serif" style="font-size:18px;letter-spacing:0.7px;color:#000;-webkit-text-stroke:0.3px #000;text-decoration:underline;text-decoration-thickness:1px;text-underline-offset:2px">2323</span><span class="mono" style="font-size:11px;letter-spacing:-0.3px">T</span></div>
<div class="a" style="left:675px;width:100px;text-align:center;top:441.5px;font-size:16px;line-height:20px;color:#333">温度</div>
<div class="a" style="left:777px;width:78px;text-align:center;top:440.5px;line-height:22px"><span class="serif" style="font-size:18px;letter-spacing:0.7px;color:#000;-webkit-text-stroke:0.3px #000;text-decoration:underline;text-decoration-thickness:1px;text-underline-offset:2px">23</span><span class="mono" style="font-size:11px;letter-spacing:-0.3px">℃</span></div>
<div class="a" style="left:675px;width:100px;text-align:center;top:470.5px;font-size:16px;line-height:20px;color:#333">压力</div>
<div class="a" style="left:777px;width:78px;text-align:center;top:469.5px;line-height:22px"><span class="serif" style="font-size:18px;letter-spacing:0.7px;color:#000;-webkit-text-stroke:0.3px #000;text-decoration:underline;text-decoration-thickness:1px;text-underline-offset:2px">78</span><span class="mono" style="font-size:11px;letter-spacing:-0.3px">mpa</span></div>
<div class="a" style="left:952px;top:283px;width:464px;height:25px;background:linear-gradient(#fafafa,#ececec);border-top:1px solid #cfcfcf;border-bottom:1px solid #d2d2d2"></div>
<div class="a" style="left:1041.7px;top:283px;width:0;height:100px;border-left:1px dotted #d6d6d6"></div>
<div class="a" style="left:1130.7px;top:283px;width:0;height:100px;border-left:1px dotted #d6d6d6"></div>
<div class="a" style="left:1219.8px;top:283px;width:0;height:100px;border-left:1px dotted #d6d6d6"></div>
<div class="a" style="left:1308.8px;top:283px;width:0;height:100px;border-left:1px dotted #d6d6d6"></div>
<div class="a" style="left:1398.5px;top:283px;width:0;height:100px;border-left:1px dotted #d6d6d6"></div>
<div class="a" style="left:957.0px;top:289px;font-size:12px;line-height:15px;color:#000">告警时间</div>
<div class="a" style="left:1046.7px;top:289px;font-size:12px;line-height:15px;color:#000">告警项目</div>
<div class="a" style="left:1135.7px;top:289px;font-size:12px;line-height:15px;color:#000">告警值</div>
<div class="a" style="left:1224.8px;top:289px;font-size:12px;line-height:15px;color:#000">是否正常</div>
<div class="a" style="left:1313.8px;top:289px;font-size:12px;line-height:15px;color:#000">动作</div>
<div class="a mono" style="left:956.0px;top:315px;font-size:12px;line-height:15px;letter-spacing:-1.2px;color:#000">2014-02-14</div>
<div class="a" style="left:1046.7px;top:314px;font-size:12px;line-height:15px;color:#000">1号龙门吊</div>
<div class="a mono" style="left:1134.7px;top:315px;font-size:12px;line-height:15px;letter-spacing:-1.2px;color:#000">100</div>
<div class="a" style="left:1224.8px;top:314px;font-size:12px;line-height:15px;color:#000">否</div>
<div class="a" style="left:1313.8px;top:314px;font-size:12px;line-height:15px;color:#000">无法正常启动</div>
<div class="a" style="left:952px;top:333px;width:447px;height:0;border-top:1px dotted #d0d0d0"></div>
<div class="a mono" style="left:956.0px;top:340px;font-size:12px;line-height:15px;letter-spacing:-1.2px;color:#000">2014-02-14</div>
<div class="a" style="left:1046.7px;top:339px;font-size:12px;line-height:15px;color:#000">2号龙门吊</div>
<div class="a mono" style="left:1134.7px;top:340px;font-size:12px;line-height:15px;letter-spacing:-1.2px;color:#000">100</div>
<div class="a" style="left:1224.8px;top:339px;font-size:12px;line-height:15px;color:#000">否</div>
<div class="a" style="left:1313.8px;top:339px;font-size:12px;line-height:15px;color:#000">无法正常启动</div>
<div class="a" style="left:952px;top:358px;width:447px;height:0;border-top:1px dotted #d0d0d0"></div>
<div class="a mono" style="left:956.0px;top:365px;font-size:12px;line-height:15px;letter-spacing:-1.2px;color:#000">2014-02-14</div>
<div class="a" style="left:1046.7px;top:364px;font-size:12px;line-height:15px;color:#000">3号龙门吊</div>
<div class="a mono" style="left:1134.7px;top:365px;font-size:12px;line-height:15px;letter-spacing:-1.2px;color:#000">100</div>
<div class="a" style="left:1224.8px;top:364px;font-size:12px;line-height:15px;color:#000">否</div>
<div class="a" style="left:1313.8px;top:364px;font-size:12px;line-height:15px;color:#000">无法正常启动</div>
<div class="a" style="left:1399px;top:308px;width:17px;height:71px;background:#f0f0f0;border-left:1px solid #e4e4e4"></div>
<svg class="a" style="left:1403px;top:315px" width="9" height="5"><path d="M0,4 L8,4 L4,0 Z" fill="#555"/></svg>
<svg class="a" style="left:1403px;top:367px" width="9" height="5"><path d="M0,0 L8,0 L4,4 Z" fill="#555"/></svg>
<div class="a" style="left:1400px;top:327px;width:15px;height:33px;border:1px solid #9a9a9a;border-radius:2px;background:linear-gradient(90deg,#f4f4f4,#dcdcdc)"></div>
<svg class="a" style="left:1404px;top:339px" width="8" height="8"><g stroke="#666" stroke-width="1"><line x1="0" y1="0.5" x2="7" y2="0.5"/><line x1="0" y1="3.5" x2="7" y2="3.5"/><line x1="0" y1="6.5" x2="7" y2="6.5"/></g></svg>
<div class="a" style="left:952px;top:541px;width:464px;height:25px;background:linear-gradient(#fafafa,#ececec);border-top:1px solid #cfcfcf;border-bottom:1px solid #d2d2d2"></div>
<div class="a" style="left:1041.7px;top:541px;width:0;height:100px;border-left:1px dotted #d6d6d6"></div>
<div class="a" style="left:1130.7px;top:541px;width:0;height:100px;border-left:1px dotted #d6d6d6"></div>
<div class="a" style="left:1219.8px;top:541px;width:0;height:100px;border-left:1px dotted #d6d6d6"></div>
<div class="a" style="left:1308.8px;top:541px;width:0;height:100px;border-left:1px dotted #d6d6d6"></div>
<div class="a" style="left:1398.5px;top:541px;width:0;height:100px;border-left:1px dotted #d6d6d6"></div>
<div class="a" style="left:957.0px;top:547px;font-size:12px;line-height:15px;color:#000">流程时间</div>
<div class="a" style="left:1046.7px;top:547px;font-size:12px;line-height:15px;color:#000">提交人</div>
<div class="a" style="left:1135.7px;top:547px;font-size:12px;line-height:15px;color:#000">待审批人</div>
<div class="a" style="left:1224.8px;top:547px;font-size:12px;line-height:15px;color:#000">流程描述</div>
<div class="a" style="left:1313.8px;top:547px;font-size:12px;line-height:15px;color:#000">动作</div>
<div class="a mono" style="left:956.0px;top:573px;font-size:12px;line-height:15px;letter-spacing:-1.2px;color:#000">2014-02-14</div>
<div class="a" style="left:1046.7px;top:572px;font-size:12px;line-height:15px;color:#000">刘洋</div>
<div class="a" style="left:1135.7px;top:572px;font-size:12px;line-height:15px;color:#000">赵城</div>
<div class="a" style="left:1224.8px;top:572px;font-size:12px;line-height:15px;color:#000">查看详细</div>
<div class="a" style="left:1313.8px;top:572px;font-size:12px;line-height:15px;color:#000">审核</div>
<div class="a" style="left:952px;top:591px;width:447px;height:0;border-top:1px dotted #d0d0d0"></div>
<div class="a mono" style="left:956.0px;top:598px;font-size:12px;line-height:15px;letter-spacing:-1.2px;color:#000">2014-02-14</div>
<div class="a" style="left:1046.7px;top:597px;font-size:12px;line-height:15px;color:#000">刘洋</div>
<div class="a" style="left:1135.7px;top:597px;font-size:12px;line-height:15px;color:#000">赵城</div>
<div class="a" style="left:1224.8px;top:597px;font-size:12px;line-height:15px;color:#000">查看详细</div>
<div class="a" style="left:1313.8px;top:597px;font-size:12px;line-height:15px;color:#000">审核</div>
<div class="a" style="left:952px;top:616px;width:447px;height:0;border-top:1px dotted #d0d0d0"></div>
<div class="a mono" style="left:956.0px;top:623px;font-size:12px;line-height:15px;letter-spacing:-1.2px;color:#000">2014-02-14</div>
<div class="a" style="left:1046.7px;top:622px;font-size:12px;line-height:15px;color:#000">刘洋</div>
<div class="a" style="left:1135.7px;top:622px;font-size:12px;line-height:15px;color:#000">赵城</div>
<div class="a" style="left:1224.8px;top:622px;font-size:12px;line-height:15px;color:#000">查看详细</div>
<div class="a" style="left:1313.8px;top:622px;font-size:12px;line-height:15px;color:#000">审核</div>
<div class="a" style="left:1399px;top:566px;width:17px;height:71px;background:#f0f0f0;border-left:1px solid #e4e4e4"></div>
<svg class="a" style="left:1403px;top:573px" width="9" height="5"><path d="M0,4 L8,4 L4,0 Z" fill="#555"/></svg>
<svg class="a" style="left:1403px;top:625px" width="9" height="5"><path d="M0,0 L8,0 L4,4 Z" fill="#555"/></svg>
<div class="a" style="left:1400px;top:585px;width:15px;height:33px;border:1px solid #9a9a9a;border-radius:2px;background:linear-gradient(90deg,#f4f4f4,#dcdcdc)"></div>
<svg class="a" style="left:1404px;top:597px" width="8" height="8"><g stroke="#666" stroke-width="1"><line x1="0" y1="0.5" x2="7" y2="0.5"/><line x1="0" y1="3.5" x2="7" y2="3.5"/><line x1="0" y1="6.5" x2="7" y2="6.5"/></g></svg>
<div class="a" style="left:236px;width:600px;text-align:center;top:554px;font-size:17.5px;line-height:21px;letter-spacing:1.45px;color:#333">【电厂1号线】瞬时流量动态监测分析</div>
<div class="a" style="left:244px;top:591.0px;width:658px;height:1px;background:#c0c0c0"></div>
<div class="a" style="left:178px;width:50px;text-align:right;top:583.5px;font-size:12.5px;line-height:14px;letter-spacing:0.6px;color:#606060">1</div>
<div class="a" style="left:244px;top:646.0px;width:658px;height:1px;background:#c0c0c0"></div>
<div class="a" style="left:178px;width:50px;text-align:right;top:638.5px;font-size:12.5px;line-height:14px;letter-spacing:0.6px;color:#606060">0.75</div>
<div class="a" style="left:244px;top:699.0px;width:658px;height:1px;background:#c0c0c0"></div>
<div class="a" style="left:178px;width:50px;text-align:right;top:691.5px;font-size:12.5px;line-height:14px;letter-spacing:0.6px;color:#606060">0.5</div>
<div class="a" style="left:180px;top:714px;font-size:12px;line-height:14px;color:#555;transform:rotate(-90deg);transform-origin:0 0">Value</div>
<svg class="a" style="left:0;top:0" width="1419" height="705"><path d="M248.60,760.00 C248.60,760.00 269.00,760.00 282.60,760.00 C296.24,760.00 303.06,760.00 316.70,760.00 C330.30,760.00 337.10,758.03 350.70,740.00 C364.34,721.91 371.16,669.70 384.80,669.70 C398.44,669.70 405.26,687.90 418.90,687.90 C432.58,687.90 439.42,651.61 453.10,636.50 C466.62,621.57 473.38,612.80 486.90,612.80 C500.62,612.80 507.48,679.00 521.20,679.00 C534.72,679.00 541.48,648.80 555.00,648.80 C568.96,648.80 575.94,651.25 589.90,653.80 C603.70,656.33 610.60,653.80 624.40,661.50 C637.88,669.20 644.62,700.60 658.10,700.60 C671.78,700.60 678.62,689.95 692.30,675.00 C705.86,660.19 712.64,626.20 726.20,626.20 C739.68,626.20 746.42,676.20 759.90,676.20 C773.58,676.20 780.42,653.60 794.10,653.60 C807.54,653.60 814.26,714.00 827.70,714.00 C841.14,714.00 847.86,622.40 861.30,622.40 C874.94,622.40 895.40,785.00 895.40,785.00" fill="none" stroke="#7cb5ec" stroke-width="2"/>
<circle cx="248.6" cy="760" r="4" fill="#7cb5ec"/>
<circle cx="282.6" cy="760" r="4" fill="#7cb5ec"/>
<circle cx="316.7" cy="760" r="4" fill="#7cb5ec"/>
<circle cx="350.7" cy="740" r="4" fill="#7cb5ec"/>
<circle cx="384.8" cy="669.7" r="4" fill="#7cb5ec"/>
<circle cx="418.9" cy="687.9" r="4" fill="#7cb5ec"/>
<circle cx="453.1" cy="636.5" r="4" fill="#7cb5ec"/>
<circle cx="486.9" cy="612.8" r="4" fill="#7cb5ec"/>
<circle cx="521.2" cy="679" r="4" fill="#7cb5ec"/>
<circle cx="555" cy="648.8" r="4" fill="#7cb5ec"/>
<circle cx="589.9" cy="653.8" r="4" fill="#7cb5ec"/>
<circle cx="624.4" cy="661.5" r="4" fill="#7cb5ec"/>
<circle cx="658.1" cy="700.6" r="4" fill="#7cb5ec"/>
<circle cx="692.3" cy="675.0" r="4" fill="#7cb5ec"/>
<circle cx="726.2" cy="626.2" r="4" fill="#7cb5ec"/>
<circle cx="759.9" cy="676.2" r="4" fill="#7cb5ec"/>
<circle cx="794.1" cy="653.6" r="4" fill="#7cb5ec"/>
<circle cx="827.7" cy="714" r="4" fill="#7cb5ec"/>
<circle cx="861.3" cy="622.4" r="4" fill="#7cb5ec"/>
<circle cx="895.4" cy="785" r="4" fill="#7cb5ec"/>
</svg>
</body></html>
